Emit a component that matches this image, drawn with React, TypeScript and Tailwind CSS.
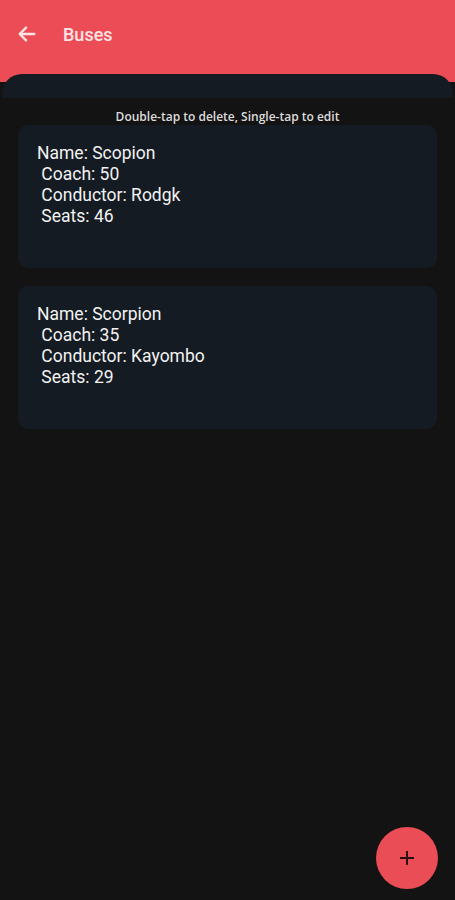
import React from "react";

const buses = [
  { name: "Scopion", coach: "50", conductor: "Rodgk", seats: "46" },
  { name: "Scorpion", coach: "35", conductor: "Kayombo", seats: "29" },
];

export default function App() {
  return (
    <div
      className="relative w-[455px] h-[900px] overflow-hidden bg-[#131313] flex flex-col"
      style={{ fontFamily: "Roboto, 'Noto Sans', sans-serif" }}
    >
      <div className="h-[82px] shrink-0 bg-[#ec4c55] flex items-start pt-[23px] pl-[16px]">
        <svg width="22" height="22" viewBox="0 0 24 24">
          <path d="M20 12H5M11 5l-7 7 7 7" fill="none" stroke="#fbe4e5" strokeWidth="2.6" strokeLinecap="round" strokeLinejoin="round" />
        </svg>
        <span className="ml-[25px] text-[18px] font-medium text-[#fbe4e5] leading-[24px]">Buses</span>
      </div>
      <div className="-mt-[8px] mx-[2px] h-[24px] shrink-0 rounded-t-[20px] bg-[#141b22]" />
      <div className="flex flex-col items-center">
        <p className="mt-[11px] text-[12px] leading-[15px] font-semibold text-[#dcdcdc]" style={{ fontFamily: "'Open Sans', sans-serif" }}>
          Double-tap to delete, Single-tap to edit
        </p>
        <div className="mt-[1px] w-full px-[18px] flex flex-col gap-[18px]">
          {buses.map((b) => (
            <div key={b.name} className="h-[143px] rounded-[10px] bg-[#141b22] pl-[19px] pt-[18px] text-[17.5px] leading-[21px] text-[#f2f2f2] whitespace-pre">
              <div>Name: {b.name}</div>
              <div> Coach: {b.coach}</div>
              <div> Conductor: {b.conductor}</div>
              <div> Seats: {b.seats}</div>
            </div>
          ))}
        </div>
      </div>
      <button className="absolute left-[376px] top-[827px] w-[62px] h-[62px] rounded-full bg-[#ea4d56] flex items-center justify-center">
        <svg width="16" height="16" viewBox="0 0 16 16">
          <path d="M8 1v14M1 8h14" stroke="#2a1010" strokeWidth="2" />
        </svg>
      </button>
    </div>
  );
}
